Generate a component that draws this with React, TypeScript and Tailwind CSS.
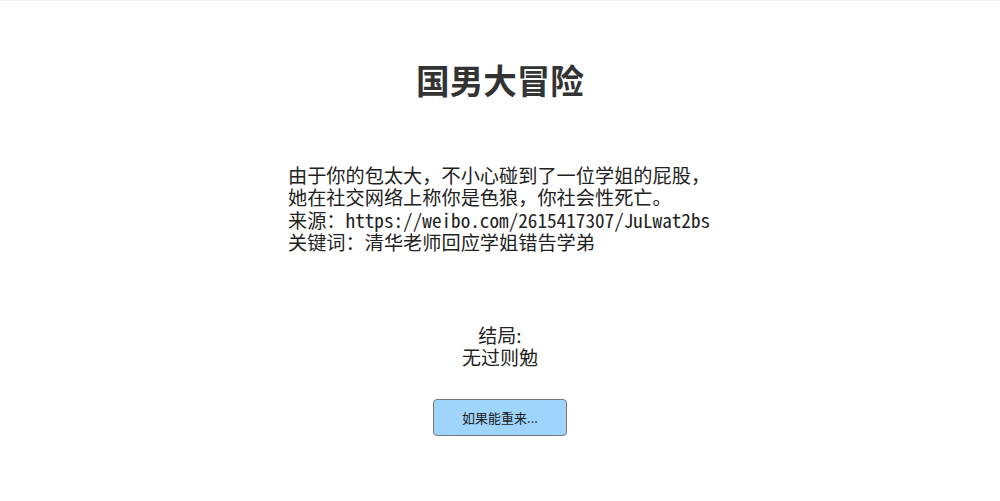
import React from "react";

const mono = "font-['Noto_Sans_Mono_CJK_SC','DejaVu_Sans_Mono',monospace]";

export default function App() {
  return (
    <div className="min-h-[501px] w-full bg-white border-t border-[#f2f2f2] text-[#333] font-['Noto_Sans_CJK_SC',sans-serif]">
      <div className="flex flex-col items-center pt-[55px]">
        <h1 className="text-[33.6px] leading-[48px] font-bold">国男大冒险</h1>

        {/* 描述 */}
        <div className={`mt-[60px] w-[424px] text-[19.2px] leading-[22.4px] text-[#222] ${mono}`}>
          <p>由于你的包太大，不小心碰到了一位学姐的屁股，</p>
          <p>她在社交网络上称你是色狼，你社会性死亡。</p>
          <p>来源：https://weibo.com/2615417307/JuLwat2bs</p>
          <p>关键词：清华老师回应学姐错告学弟</p>
        </div>

        {/* 结局 */}
        <div className="mt-[70px] text-center text-[19px] leading-[22.4px] text-[#222]">
          <p>结局:</p>
          <p>无过则勉</p>
        </div>

        <button className="mt-[31px] w-[134px] h-[37px] rounded-[4px] border border-[#777] bg-[#9fd4fb] text-[13px] text-[#222]">
          如果能重来...
        </button>
      </div>
    </div>
  );
}
